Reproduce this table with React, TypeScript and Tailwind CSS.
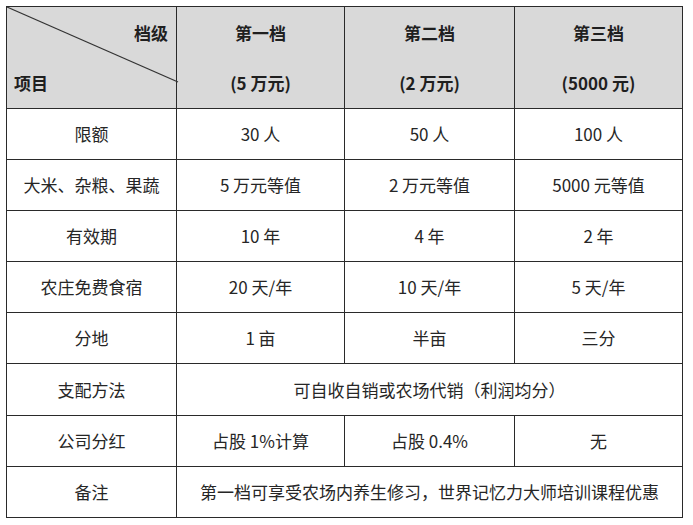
const tiers = [
  { name: "第一档", price: "(5 万元)" },
  { name: "第二档", price: "(2 万元)" },
  { name: "第三档", price: "(5000 元)" },
];

type Row = { label: string; cells: string[]; span?: boolean; h: string };

const rows: Row[] = [
  { label: "限额", cells: ["30 人", "50 人", "100 人"], h: "h-[51px]" },
  { label: "大米、杂粮、果蔬", cells: ["5 万元等值", "2 万元等值", "5000 元等值"], h: "h-[51px]" },
  { label: "有效期", cells: ["10 年", "4 年", "2 年"], h: "h-[51px]" },
  { label: "农庄免费食宿", cells: ["20 天/年", "10 天/年", "5 天/年"], h: "h-[51px]" },
  { label: "分地", cells: ["1 亩", "半亩", "三分"], h: "h-[51px]" },
  { label: "支配方法", cells: ["可自收自销或农场代销（利润均分）"], span: true, h: "h-[52px]" },
  { label: "公司分红", cells: ["占股 1%计算", "占股 0.4%", "无"], h: "h-[51px]" },
  { label: "备注", cells: ["第一档可享受农场内养生修习，世界记忆力大师培训课程优惠"], span: true, h: "h-[51px]" },
];

const cellBase =
  "flex items-center justify-center border-r border-b border-[#2a2a2a] text-[17px] text-[#262626] whitespace-nowrap";

export default function App() {
  return (
    <div className="min-h-[525px] w-[693px] bg-white pt-[6px] pl-[6px] font-['Noto_Sans_CJK_SC','Noto_Sans',sans-serif]">
      <div className="grid w-[677px] grid-cols-[170px_168px_170px_168px] border-l border-t border-[#2a2a2a]">
        {/* header */}
        <div className="relative h-[102px] border-r border-b border-[#2a2a2a] bg-[#d9d9d9] text-[17px] font-bold text-[#1f1f1f]">
          <svg className="absolute left-0 top-0 overflow-visible" width="172" height="76">
            <line x1="0" y1="0" x2="171" y2="75" stroke="#333" strokeWidth="1.3" />
          </svg>
          <div className="flex h-full flex-col justify-between pb-[12px] pl-[7px] pr-[8px] pt-[13px]">
            <span className="self-end leading-[26px]">档级</span>
            <span className="self-start leading-[26px]">项目</span>
          </div>
        </div>
        {tiers.map((t) => (
          <div
            key={t.name}
            className="flex h-[102px] flex-col items-center justify-between border-r border-b border-[#2a2a2a] bg-[#d9d9d9] pb-[12px] pt-[13px] text-[17px] font-bold text-[#1f1f1f]"
          >
            <span className="leading-[26px]">{t.name}</span>
            <span className="leading-[26px]">{t.price}</span>
          </div>
        ))}

        {rows.map((r) => (
          <div key={r.label} className="contents">
            <div className={`${cellBase} ${r.h}`}>{r.label}</div>
            {r.span ? (
              <div className={`${cellBase} ${r.h} col-span-3`}>{r.cells[0]}</div>
            ) : (
              r.cells.map((c, i) => (
                <div key={i} className={`${cellBase} ${r.h}`}>
                  {c}
                </div>
              ))
            )}
          </div>
        ))}
      </div>
    </div>
  );
}
